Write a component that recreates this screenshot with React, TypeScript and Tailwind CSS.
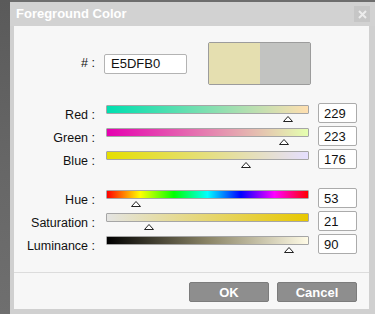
import React from 'react'

type Slider = {
  label: string
  value: number
  pos: number // 0..1 along the bar
  gradient: string
}

const rgbSliders: Slider[] = [
  { label: 'Red', value: 229, pos: 229 / 255, gradient: 'linear-gradient(to right, #00dfb0, #ffdfb0)' },
  { label: 'Green', value: 223, pos: 223 / 255, gradient: 'linear-gradient(to right, #e500b0, #e5ffb0)' },
  { label: 'Blue', value: 176, pos: 176 / 255, gradient: 'linear-gradient(to right, #e5df00, #e5dfff)' },
]

const hslSliders: Slider[] = [
  {
    label: 'Hue',
    value: 53,
    pos: 53 / 360,
    gradient:
      'linear-gradient(to right, #ff0000, #ffff00 16.6%, #00ff00 33.3%, #00ffff 50%, #0000ff 66.6%, #ff00ff 83.3%, #ff0000)',
  },
  { label: 'Saturation', value: 21, pos: 0.21, gradient: 'linear-gradient(to right, #e4e4e2, #e8c800)' },
  { label: 'Luminance', value: 90, pos: 0.9, gradient: 'linear-gradient(to right, #000000, #8a8466 50%, #fffbe6)' },
]

const SliderRow = ({ s }: { s: Slider }) => (
  <div className="flex h-[23px] items-start">
    <div className="w-[82px] pt-[5px] pr-[1px] text-right leading-[14px]">{s.label} :</div>
    <div className="relative ml-[10px] mt-[2px] w-[203px]">
      <div
        className="h-[9px] w-full rounded-[1px] border border-[#a6a6a6]"
        style={{ backgroundImage: s.gradient }}
      />
      {/* thumb */}
      <svg
        className="absolute top-[11px]"
        style={{ left: Math.round(s.pos * 203) - 5 }}
        width="10"
        height="6"
        viewBox="0 0 10 6"
      >
        <polygon points="5,0.5 9.5,5.5 0.5,5.5" fill="#ffffff" stroke="#222222" strokeWidth="1" />
      </svg>
    </div>
    <div className="ml-[9px] flex h-[20px] w-[39px] items-center rounded-[2px] border border-[#ababab] bg-white pl-[5px] text-[13px] leading-none">
      {s.value}
    </div>
  </div>
)

export default function App() {
  return (
    <div
      className="flex h-[314px] w-[375px] overflow-hidden bg-[#6d6d6d] text-[12.5px] text-[#111]"
      style={{ fontFamily: '"Liberation Sans", Arial, sans-serif' }}
    >
      {/* backdrop strip */}
      <div className="w-[10px] shrink-0 bg-gradient-to-b from-[#5a5a5a] via-[#666] to-[#6f6f6f]" />

      {/* dialog */}
      <div className="flex w-[365px] shrink-0 flex-col pt-[2px]">
        {/* title bar */}
        <div className="flex h-[24px] items-center justify-between bg-[#d2d2d2] pl-[6px] pr-[5px]">
          <span className="text-[13px] font-bold text-white">Foreground Color</span>
          <div className="flex h-[16px] w-[16px] items-center justify-center bg-[#c6c6c6]">
            <svg width="9" height="9" viewBox="0 0 9 9">
              <path d="M1 1 L8 8 M8 1 L1 8" stroke="#ececec" strokeWidth="2" />
            </svg>
          </div>
        </div>

        {/* frame + body */}
        <div className="flex flex-1 flex-col bg-[#d0d0d0] pl-[4px] pr-[6px] pb-[5px]">
          <div className="flex flex-1 flex-col bg-[#f7f7f7]">
            {/* hex row */}
            <div className="mt-[16px] flex h-[43px] items-center">
              <div className="w-[82px] pr-[1px] text-right">#&nbsp;:</div>
              <div className="ml-[8px] flex h-[20px] w-[83px] items-center rounded-[2px] border border-[#b3b3b3] bg-white pl-[6px] text-[13px]">
                E5DFB0
              </div>
              <div className="ml-[21px] flex h-[43px] w-[103px] rounded-[2px] border border-[#9c9c9c] bg-[#c2c3c1]">
                <div className="w-[51px] bg-[#e5dfb0]" />
                <div className="flex-1 bg-[#c2c3c1]" />
              </div>
            </div>

            {/* RGB */}
            <div className="mt-[18px] flex flex-col">
              {rgbSliders.map((s) => (
                <SliderRow key={s.label} s={s} />
              ))}
            </div>

            {/* HSL */}
            <div className="mt-[16px] flex flex-col">
              {hslSliders.map((s) => (
                <SliderRow key={s.label} s={s} />
              ))}
            </div>

            {/* footer */}
            <div className="mt-[15px] flex justify-end gap-[8px] border-t border-[#dcdcdc] pt-[9px] pr-[12px]">
              <button className="h-[20px] w-[80px] rounded-[2px] border border-[#7c7c7c] bg-[#8e8e8e] text-[13px] font-bold text-white">
                OK
              </button>
              <button className="h-[20px] w-[80px] rounded-[2px] border border-[#7c7c7c] bg-[#8e8e8e] text-[13px] font-bold text-white">
                Cancel
              </button>
            </div>
          </div>
        </div>
      </div>
    </div>
  )
}
